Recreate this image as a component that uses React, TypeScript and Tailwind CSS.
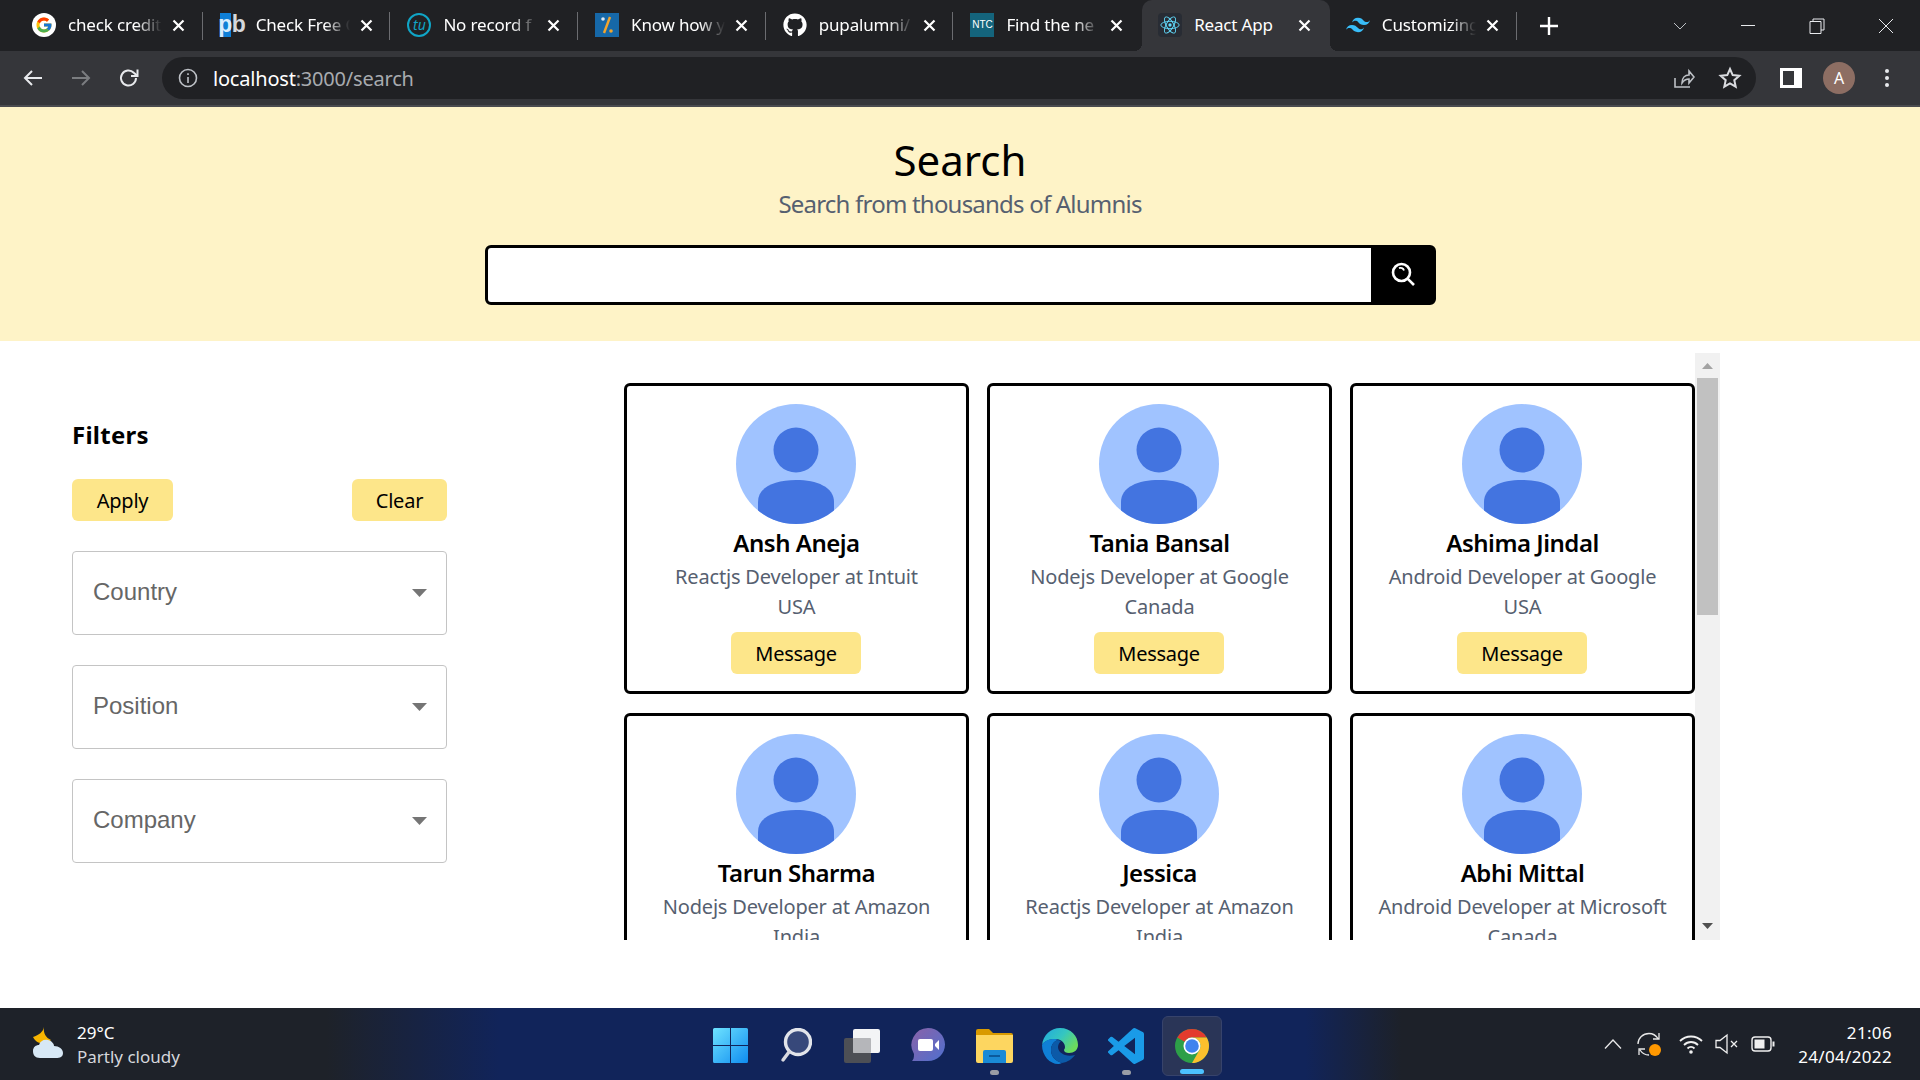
import React from 'react';
import { FcGoogle } from 'react-icons/fc';
import { FaGithub } from 'react-icons/fa';

const uiFont = { fontFamily: '"Noto Sans", sans-serif' };

const PeopleData = [
  { name: 'Ansh Aneja', role: 'Reactjs Developer at Intuit', place: 'USA' },
  { name: 'Tania Bansal', role: 'Nodejs Developer at Google', place: 'Canada' },
  { name: 'Ashima Jindal', role: 'Android Developer at Google', place: 'USA' },
  { name: 'Tarun Sharma', role: 'Nodejs Developer at Amazon', place: 'India' },
  { name: 'Jessica', role: 'Reactjs Developer at Amazon', place: 'India' },
  { name: 'Abhi Mittal', role: 'Android Developer at Microsoft', place: 'Canada' },
];

const ReactIcon = () => (
  <div className="flex h-6 w-6 items-center justify-center rounded-sm bg-[#282c34]">
    <svg viewBox="0 0 24 24" className="h-[22px] w-[22px]" fill="none" stroke="#61dafb" strokeWidth="1">
      <ellipse cx="12" cy="12" rx="10" ry="4" />
      <ellipse cx="12" cy="12" rx="10" ry="4" transform="rotate(60 12 12)" />
      <ellipse cx="12" cy="12" rx="10" ry="4" transform="rotate(120 12 12)" />
      <circle cx="12" cy="12" r="1.8" fill="#61dafb" stroke="none" />
    </svg>
  </div>
);

const TailwindIcon = () => (
  <svg viewBox="0 0 24 24" className="h-6 w-6" fill="#38bdf8">
    <path d="M12.001 4.8c-3.2 0-5.2 1.6-6 4.8 1.2-1.6 2.6-2.2 4.2-1.8.913.228 1.565.89 2.288 1.624C13.666 10.618 15.027 12 18.001 12c3.2 0 5.2-1.6 6-4.8-1.2 1.6-2.6 2.2-4.2 1.8-.913-.228-1.565-.89-2.288-1.624C16.337 6.182 14.976 4.8 12.001 4.8zm-6 7.2c-3.2 0-5.2 1.6-6 4.8 1.2-1.6 2.6-2.2 4.2-1.8.913.228 1.565.89 2.288 1.624 1.177 1.194 2.538 2.576 5.512 2.576 3.2 0 5.2-1.6 6-4.8-1.2 1.6-2.6 2.2-4.2 1.8-.913-.228-1.565-.89-2.288-1.624C10.337 13.382 8.976 12 6.001 12z" />
  </svg>
);

const TabData = [
  {
    title: 'check credit',
    icon: (
      <div className="flex h-6 w-6 items-center justify-center rounded-full bg-white">
        <FcGoogle size={18} />
      </div>
    ),
    sep: true,
  },
  {
    title: 'Check Free C',
    icon: (
      <div className="flex h-6 w-6 items-center text-[23px] font-bold leading-[24px] text-[#d5d8dc]" style={{ fontFamily: '"Liberation Sans", sans-serif' }}>
        <span className="flex h-6 w-[11px] shrink-0 items-center justify-center bg-[#0f7fd6] pb-[2px] text-[#d8ecfb]">p</span>
        <span className="flex h-6 shrink-0 items-center pb-[2px] pl-px">b</span>
      </div>
    ),
    sep: true,
  },
  {
    title: 'No record f',
    icon: (
      <div className="flex h-6 w-6 items-center justify-center rounded-full border-2 border-[#10a5c6] text-[14px] italic leading-none text-[#10a5c6]">
        tu
      </div>
    ),
    sep: true,
  },
  {
    title: 'Know how y',
    icon: (
      <svg viewBox="0 0 24 24" className="h-6 w-6">
        <rect width="24" height="24" fill="#1668a8" />
        <path d="M15 4 9 20" stroke="#f2a52c" strokeWidth="2.4" />
        <circle cx="8" cy="6" r="1.8" fill="#dce9f2" />
        <circle cx="16" cy="18" r="1.8" fill="#f2a52c" />
      </svg>
    ),
    sep: true,
  },
  {
    title: 'pupalumni/',
    icon: (
      <div className="flex h-6 w-6 items-center justify-center rounded-full bg-[#202124] text-white">
        <FaGithub size={24} />
      </div>
    ),
    sep: true,
  },
  {
    title: 'Find the ne',
    icon: (
      <div className="flex h-6 w-6 items-center justify-center bg-[#14647c] text-[10px] leading-none text-white" style={{ fontFamily: '"Liberation Sans", sans-serif' }}>
        NTC
      </div>
    ),
    sep: false,
  },
  { title: 'React App', icon: <ReactIcon />, sep: false, active: true },
  { title: 'Customizing', icon: <TailwindIcon />, sep: true },
];

const Tab = ({ title, icon, sep, active }: { title: string; icon: React.ReactNode; sep?: boolean; active?: boolean }) => (
  <div className={`relative flex h-[51px] w-[187.7px] shrink-0 items-center pb-[1px] pl-[16px] ${active ? 'rounded-t-[10px] bg-[#35363a]' : ''}`}>
    {active && (
      <>
        <div className="absolute bottom-0 left-[-8px] h-2 w-2 bg-[radial-gradient(circle_at_0_0,transparent_8px,#35363a_8px)]" />
        <div className="absolute bottom-0 right-[-8px] h-2 w-2 bg-[radial-gradient(circle_at_100%_0,transparent_8px,#35363a_8px)]" />
      </>
    )}
    <div className="shrink-0">{icon}</div>
    <div className={`ml-3 w-[98px] shrink-0 whitespace-nowrap text-[17px] tracking-[-0.01em] text-white ${active ? '' : '[mask-image:linear-gradient(90deg,#000_70%,transparent_96%)]'}`}>
      {title}
    </div>
    <svg viewBox="0 0 13 13" className="ml-[6px] h-[13px] w-[13px] shrink-0" stroke="#fff" strokeWidth="2.2">
      <path d="M1.500 1.500l10 10M11.500 1.500l-10 10" />
    </svg>
    {sep && <div className="absolute right-px top-[12px] h-[28px] w-px bg-[#6b6c70]" />}
  </div>
);

const Avatar = () => (
  <svg viewBox="0 0 120 120" className="mr-px h-[120px] w-[120px]">
    <defs>
      <clipPath id="avatar-clip">
        <circle cx="60" cy="60" r="60" />
      </clipPath>
    </defs>
    <circle cx="60" cy="60" r="60" fill="#a0c3ff" />
    <g clipPath="url(#avatar-clip)" fill="#4374e0">
      <circle cx="60" cy="46" r="22.5" />
      <path d="M22 120V98c0-15 17-22 38-22s38 7 38 22v22z" />
    </g>
  </svg>
);

const Card = ({ name, role, place }: { name: string; role: string; place: string }) => (
  <div className="flex h-[311px] w-[345px] flex-col items-center rounded-md border-[3px] border-black pt-[18px]">
    <Avatar />
    <div className="mt-[3px] text-[24px] font-semibold leading-[32px] tracking-[-0.02em] text-black">{name}</div>
    <div className="mt-[3px] text-center text-[20px] leading-[30px] tracking-[-0.009em] text-[#566070]">
      <div>{role}</div>
      <div>{place}</div>
    </div>
    <button className="mr-px mt-[10px] h-[42px] w-[130px] rounded-md bg-[#fde68a] pt-[2px] text-[20px] tracking-[-0.015em] text-black">Message</button>
  </div>
);

const FilterSelect = ({ label }: { label: string }) => (
  <div className="flex h-[84px] w-[375px] items-center justify-between rounded border border-[#c4c4c4] pl-[20px] pr-[19px]">
    <span className="pb-[2px] text-[24px] text-[#666666]" style={{ fontFamily: '"Liberation Sans", sans-serif' }}>{label}</span>
    <svg viewBox="0 0 15 8" className="h-2 w-[15px]" fill="#757575">
      <path d="M0 0h15L7.5 8z" />
    </svg>
  </div>
);

const ChromeIcon = ({ size = 34 }: { size?: number }) => (
  <svg viewBox="4 4 40 40" width={size} height={size}>
    <circle cx="24" cy="24" r="20" fill="#2d9f48" />
    <path d="M24 4a20 20 0 0 1 17.32 10H24a10 10 0 0 0-8.66 5L6.68 14A20 20 0 0 1 24 4z" fill="#e33b2e" />
    <path d="M41.32 14H24a10 10 0 0 1 8.66 15L24 44a20 20 0 0 0 17.32-30z" fill="#fbc02d" />
    <circle cx="24" cy="24" r="10" fill="#fff" />
    <circle cx="24" cy="24" r="8" fill="#3f83ee" />
  </svg>
);

const Slot = ({ children, dot, active }: { children: React.ReactNode; dot?: boolean; active?: boolean }) => (
  <div className={`relative flex h-[60px] items-center justify-center ${active ? 'mx-[3px] w-[60px] rounded-md border border-[#37436b] bg-[#2a3557]' : 'w-[66px]'}`}>
    {children}
    {dot && <div className="absolute bottom-px h-[5px] w-[9px] rounded-full bg-[#9a9da5]" />}
    {active && <div className="absolute bottom-[1px] h-[5px] w-6 rounded-full bg-[#4cc2ff]" />}
  </div>
);

export default function App() {
  return (
    <div className="flex h-[1080px] w-[1920px] flex-col overflow-hidden bg-white" style={uiFont}>
      {/* TAB BAR */}
      <div className="flex h-[51px] shrink-0 items-center bg-[#202124] pl-[16px]">
        {TabData.map((t) => (
          <Tab key={t.title} {...t} />
        ))}
        <svg viewBox="0 0 18 18" className="ml-[22px] h-[18px] w-[18px]" stroke="#fff" strokeWidth="2.4">
          <path d="M9 0v18M0 9h18" />
        </svg>
        <svg viewBox="0 0 14 8" className="ml-[115px] h-2 w-[14px]" fill="none" stroke="#bdc1c6" strokeWidth="1">
          <path d="M1 1l6 6 6-6" />
        </svg>
        <div className="ml-[54px] h-px w-[14px] bg-[#e8eaed]" />
        <svg viewBox="0 0 16 16" className="ml-[54px] h-4 w-4" fill="none" stroke="#e8eaed" strokeWidth="1">
          <path d="M4 3V1h11v11h-3M1 3.500h11v12H1z" />
        </svg>
        <svg viewBox="0 0 16 16" className="ml-[53px] h-4 w-4" fill="none" stroke="#e8eaed" strokeWidth="1">
          <path d="M1 1l14 14M15 1L1 15" />
        </svg>
      </div>

      {/* TOOLBAR */}
      <div className="flex h-[56px] shrink-0 items-center border-b-2 border-b-[#4a4b4f] bg-[#35363a] pl-[9px] pr-[9px]">
        <div className="flex h-12 w-12 items-center justify-center">
          <svg viewBox="0 0 24 24" className="h-6 w-6" fill="none" stroke="#e8eaed" strokeWidth="2">
            <path d="M21 12H4M11 5l-7 7 7 7" />
          </svg>
        </div>
        <div className="flex h-12 w-12 items-center justify-center">
          <svg viewBox="0 0 24 24" className="h-6 w-6" fill="none" stroke="#7b7d80" strokeWidth="2">
            <path d="M3 12h17M13 5l7 7-7 7" />
          </svg>
        </div>
        <div className="flex h-12 w-12 items-center justify-center">
          <svg viewBox="0 0 24 24" className="h-6 w-6" fill="none" stroke="#e8eaed" strokeWidth="2">
            <path d="M19 12a7.500 7.500 0 1 1-2.200-5.300L20 9.500" />
            <path d="M20.500 3.500v6.500H14" />
          </svg>
        </div>
        <div className="ml-[9px] flex h-[42px] min-w-0 flex-1 items-center rounded-full bg-[#202124] pl-[16px] pr-[16px]">
          <svg viewBox="0 0 20 20" className="h-5 w-5" fill="none" stroke="#bdc1c6" strokeWidth="1.6">
            <circle cx="10" cy="10" r="8.500" />
            <path d="M10 9v6M10 5.200v1.800" />
          </svg>
          <div className="ml-[15px] pt-[2px] text-[20px] tracking-[-0.01em] text-[#a8abaf]">
            <span className="text-white">localhost</span>:3000/search
          </div>
          <svg viewBox="0 0 24 24" className="ml-auto h-6 w-6" fill="none" stroke="#bdc1c6" strokeWidth="1.6">
            <path d="M4 12v9h15M11 17c0-5 3-8 7-8V5l5 6-5 6v-4c-3 0-5 1-7 4z" />
          </svg>
          <svg viewBox="0 0 24 24" className="ml-[23px] mr-[-2px] h-6 w-6" fill="none" stroke="#dadce0" strokeWidth="2">
            <path d="M12 3l2.700 6.100 6.600.7-5 4.400 1.400 6.500L12 17.400l-5.700 3.300 1.400-6.500-5-4.400 6.600-.7z" />
          </svg>
        </div>
        <div className="ml-[11px] flex h-12 w-12 items-center justify-center">
          <div className="flex h-5 w-[22px] justify-end border-[3px] border-white border-r-0">
            <div className="h-full w-[8px] bg-white" />
          </div>
        </div>
        <div className="flex h-12 w-12 items-center justify-center">
          <div className="flex h-8 w-8 items-center justify-center rounded-full bg-[#8d6e63] text-[16px] text-white">A</div>
        </div>
        <div className="flex h-12 w-12 flex-col items-center justify-center gap-[3px]">
          <div className="h-1 w-1 rounded-full bg-[#e8eaed]" />
          <div className="h-1 w-1 rounded-full bg-[#e8eaed]" />
          <div className="h-1 w-1 rounded-full bg-[#e8eaed]" />
        </div>
      </div>

      {/* HEADER */}
      <div className="flex h-[234px] shrink-0 flex-col items-center bg-[#fef3c7] pt-[29px]">
        <h1 className="text-[42px] leading-[48px] text-black">Search</h1>
        <p className="mt-[4px] text-[24px] leading-[32px] tracking-[-0.033em] text-[#566070]">Search from thousands of Alumnis</p>
        <div className="mt-[25px] flex h-[60px] w-[951px] overflow-hidden rounded-md border-[3px] border-black bg-black">
          <input className="min-w-0 flex-1 bg-white outline-none" />
          <button className="flex w-[62px] items-center justify-center pb-[2px] pl-[3px]">
            <svg viewBox="0 0 24 24" className="h-6 w-6" fill="none" stroke="#fff" strokeWidth="2.6">
              <circle cx="10.500" cy="10.500" r="8.500" />
              <path d="M16.800 16.800 23 23" />
              <path d="M8 6.200c2-.8 4.300 0 5 2.200" strokeWidth="1.800" />
            </svg>
          </button>
        </div>
      </div>

      {/* BODY */}
      <div className="flex min-h-0 flex-1 pb-[69px] pl-[72px] pt-[12px]">
        <aside className="w-[375px] shrink-0 pt-[66px]">
          <h2 className="text-[24px] font-bold leading-[32px] tracking-[0.01em] text-black">Filters</h2>
          <div className="mt-[28px] flex justify-between">
            <button className="h-[42px] w-[101px] rounded-md bg-[#fde68a] pt-[2px] text-[20px] tracking-[-0.01em] text-black">Apply</button>
            <button className="h-[42px] w-[95px] rounded-md bg-[#fde68a] pt-[2px] text-[20px] tracking-[-0.01em] text-black">Clear</button>
          </div>
          <div className="mt-[30px] flex flex-col gap-[30px]">
            <FilterSelect label="Country" />
            <FilterSelect label="Position" />
            <FilterSelect label="Company" />
          </div>
        </aside>
        <div className="ml-[177px] h-[587px] overflow-hidden pt-[30px]">
          <div className="grid grid-cols-[345px_345px_345px] gap-x-[18px] gap-y-[19px]">
            {PeopleData.map((p) => (
              <Card key={p.name} {...p} />
            ))}
          </div>
        </div>
        {/* barra de rolagem */}
        <div className="flex h-[587px] w-[25px] shrink-0 flex-col items-center bg-[#f1f1f1] px-[2px]">
          <div className="flex h-[25px] items-center justify-center">
            <svg viewBox="0 0 11 6" className="h-[6px] w-[11px]" fill="#a3a3a3">
              <path d="M5.500 0 11 6H0z" />
            </svg>
          </div>
          <div className="h-[237px] w-full bg-[#c1c1c1]" />
          <div className="mt-auto flex h-[25px] items-center justify-center pb-[4px]">
            <svg viewBox="0 0 11 6" className="h-[6px] w-[11px]" fill="#505050">
              <path d="M0 0h11L5.500 6z" />
            </svg>
          </div>
        </div>
      </div>

      {/* TASKBAR */}
      <div className="flex h-[72px] shrink-0 items-center bg-[linear-gradient(90deg,#1e2229_0%,#1e2229_17%,#11245a_26%,#11245a_68%,#1d2129_73%,#1d2129_100%)]">
        <div className="flex w-[697px] shrink-0 items-center pl-[31px]">
          <svg viewBox="0 0 34 34" className="h-[34px] w-[34px]">
            <path d="M13 0c-1 5-5 8-11 10 2 4 6 7 11 6 3 0 6-2 7-3C15 11 12 6 13 0z" fill="#f7b500" />
            <path d="M9 31c-5 0-7-3-7-7 0-4 3-6 6-6 1-4 5-6 9-5 4 1 6 4 6 6 5 0 9 3 9 7s-3 5-7 5z" fill="#d7e8f5" />
          </svg>
          <div className="ml-[12px] pt-[2px] text-white">
            <div className="text-[17px] leading-[24px]">29°C</div>
            <div className="text-[17px] leading-[24px] text-[#d5d7dc]">Partly cloudy</div>
          </div>
        </div>
        <div className="mt-[3px] flex w-[528px] shrink-0 items-center">
          <Slot>
            <svg viewBox="0 0 35 35" className="h-[35px] w-[35px]">
              <defs>
                <linearGradient id="win" x1="0" y1="0" x2="1" y2="1">
                  <stop offset="0" stopColor="#6ee3ff" />
                  <stop offset="1" stopColor="#0f8cf0" />
                </linearGradient>
              </defs>
              <path d="M0 1.500A1.500 1.500 0 0 1 1.500 0H17v17H0zM18 0h15.500A1.500 1.500 0 0 1 35 1.500V17H18zM0 18h17v17H1.500A1.500 1.500 0 0 1 0 33.500zM18 18h17v15.500a1.500 1.500 0 0 1-1.500 1.500H18z" fill="url(#win)" />
            </svg>
          </Slot>
          <Slot>
            <svg viewBox="0 0 32 36" className="h-9 w-8">
              <circle cx="18" cy="14" r="12.500" fill="#37487a" stroke="#e2e4ea" strokeWidth="3.400" />
              <path d="M9 24 3 32" stroke="#d9d9e0" strokeWidth="3.400" strokeLinecap="round" />
            </svg>
          </Slot>
          <Slot>
            <svg viewBox="0 0 36 34" className="h-[34px] w-9">
              <rect x="0" y="9" width="27" height="25" rx="2" fill="#4d4f55" />
              <rect x="9" y="0" width="27" height="24" rx="2" fill="#f3f4f6" />
              <rect x="9" y="9" width="18" height="15" rx="1" fill="#b5b6ba" />
            </svg>
          </Slot>
          <Slot>
            <svg viewBox="0 0 34 35" className="h-[35px] w-[34px]">
              <defs>
                <linearGradient id="chat" x1="0" y1="0" x2="1" y2="1">
                  <stop offset="0" stopColor="#8a62a8" />
                  <stop offset="1" stopColor="#4f70cf" />
                </linearGradient>
              </defs>
              <path d="M17 0c9.500 0 17 7.500 17 16.500S26.500 33 17 33H1c1.500-1.500 2-3 2-7A17 17 0 0 1 17 0z" fill="url(#chat)" />
              <rect x="7" y="11" width="15" height="12" rx="2" fill="#fff" />
              <path d="M24 16l4-4v10l-4-4z" fill="#fff" />
            </svg>
          </Slot>
          <Slot dot>
            <svg viewBox="0 0 37 34" className="h-[34px] w-[37px]">
              <path d="M0 2a2 2 0 0 1 2-2h11l4 4h18a2 2 0 0 1 2 2v4H0z" fill="#d99a00" />
              <path d="M0 6h37v26a2 2 0 0 1-2 2H2a2 2 0 0 1-2-2z" fill="#fdd660" />
              <path d="M7 23a2 2 0 0 1 2-2h19a2 2 0 0 1 2 2v11H7z" fill="#1a8ad6" />
              <rect x="13" y="26" width="11" height="2" fill="#0b5a9c" />
            </svg>
          </Slot>
          <Slot>
            <svg viewBox="0 0 36 36" className="h-9 w-9">
              <defs>
                <linearGradient id="edge" x1="0" y1="0" x2="1" y2="0.6">
                  <stop offset="0" stopColor="#1fa8e0" />
                  <stop offset="0.55" stopColor="#35c6c0" />
                  <stop offset="1" stopColor="#6cdc5c" />
                </linearGradient>
              </defs>
              <path d="M0 17C1 7 9 0 18 0c11 0 18 8 18 17 0 5-4 8-9 8-3 0-5-1-5-3 0-1 1-1 1-3 0-4-4-8-9-8C8 11 2 13 0 17z" fill="url(#edge)" />
              <path d="M0 17c2-4 7-6 12-6 2 0 3 .3 4 1-4 1-7 5-7 10 0 6 4 11 11 13-1 .5-3 1-4 1C8 36 0 28 0 17z" fill="#0f7fd6" />
              <path d="M16 12c-4 1-7 5-7 10 0 6 4 11 11 13 6-1 10-4 13-8-3 1-7 1-10 0-5-2-7-5-7-8 0-3 2-5 3-6z" fill="#0c5aa8" />
            </svg>
          </Slot>
          <Slot dot>
            <svg viewBox="0 0 24 24" className="h-[36px] w-[36px]" fill="#1a9be8">
              <path d="M23.150 2.587L18.210.21a1.494 1.494 0 0 0-1.705.29l-9.460 8.630-4.120-3.128a.999.999 0 0 0-1.276.057L.327 7.261A1 1 0 0 0 .326 8.740L3.899 12 .326 15.260a1 1 0 0 0 .001 1.479L1.650 17.940a.999.999 0 0 0 1.276.057l4.120-3.128 9.460 8.630a1.492 1.492 0 0 0 1.704.29l4.942-2.377A1.500 1.500 0 0 0 24 20.060V3.939a1.500 1.500 0 0 0-.85-1.352zm-5.146 14.861L10.826 12l7.178-5.448v10.896z" />
            </svg>
          </Slot>
          <Slot active>
            <ChromeIcon />
          </Slot>
        </div>
        <div className="flex flex-1 items-center justify-end pr-[28px] text-white">
          <svg viewBox="0 0 18 10" className="h-[10px] w-[18px]" fill="none" stroke="#e8e8e8" strokeWidth="1.300">
            <path d="M1 9.500l8-8.500 8 8.500" />
          </svg>
          <svg viewBox="0 0 24 24" className="ml-[15px] h-6 w-6" fill="none" stroke="#e8e8e8" strokeWidth="1.300">
            <path d="M1 12C1 6 6 1.500 12 1.500c4 0 7 2 9 5M22 1v6h-6" />
            <path d="M3 18c2 3 5 5 9 5M2 23v-6h6" />
            <circle cx="18" cy="18" r="6" fill="#ff9800" stroke="none" />
          </svg>
          <svg viewBox="0 0 24 24" className="ml-[18px] h-6 w-6" fill="none" stroke="#f0f0f0" strokeWidth="1.800">
            <path d="M1 9c6-6 16-6 22 0M5 13c4-4 10-4 14 0M8.500 16.500c2-2 5-2 7 0" />
            <circle cx="12" cy="20" r="1.800" fill="#f0f0f0" stroke="none" />
          </svg>
          <svg viewBox="0 0 24 24" className="ml-[12px] h-6 w-6" fill="none" stroke="#f0f0f0" strokeWidth="1.300">
            <path d="M1 8.500v7h4l7 5.500V3L5 8.500zM16 9l6 6M22 9l-6 6" />
          </svg>
          <svg viewBox="0 0 24 16" className="ml-[12px] h-4 w-6" fill="none" stroke="#f0f0f0" strokeWidth="1.400">
            <rect x="1" y="1" width="19" height="14" rx="3" />
            <rect x="3.500" y="3.500" width="10" height="9" fill="#f0f0f0" stroke="none" />
            <path d="M22.500 5.500v5" strokeWidth="2" />
          </svg>
          <div className="ml-[23px] pt-[2px] text-right text-[17px] leading-[24px] tracking-[0.02em]">
            <div>21:06</div>
            <div>24/04/2022</div>
          </div>
        </div>
      </div>
    </div>
  );
}
